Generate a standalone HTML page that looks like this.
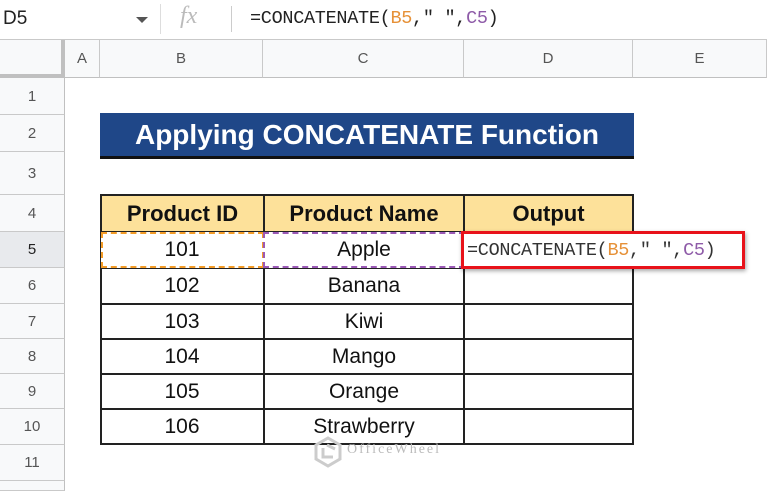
<!DOCTYPE html><html><head><style>
body{margin:0;width:767px;height:487px;overflow:hidden;background:#fff;font-family:"Liberation Sans",Arial,sans-serif;position:relative}
.a{position:absolute;box-sizing:border-box}
.rh{position:absolute;left:0;width:65px;border-bottom:1px solid #c9c9c9;border-right:1px solid #c0c0c0;background:#f8f9fa;color:#555;font-size:15px;display:flex;align-items:center;justify-content:center;box-sizing:border-box}
.ch{position:absolute;top:40px;height:38px;border-right:1px solid #c9c9c9;background:#f8f9fa;color:#555;font-size:15px;display:flex;align-items:center;justify-content:center;box-sizing:border-box;border-bottom:1px solid #c0c0c0}
.c{position:absolute;display:flex;align-items:center;justify-content:center;font-size:21px;color:#111;box-sizing:border-box}
.h{font-weight:bold;font-size:22px}
.f{font-family:"Liberation Mono",monospace;font-size:18.5px;letter-spacing:-0.3px}
</style></head><body>
<div class="a" style="left:0;top:0;width:767px;height:40px;border-bottom:1px solid #c9c9c9"></div>
<div class="a" style="left:3px;top:8px;font-size:19px;color:#222">D5</div>
<div class="a" style="left:136px;top:17px;width:0;height:0;border-left:6px solid transparent;border-right:6px solid transparent;border-top:6px solid #555"></div>
<div class="a" style="left:160px;top:4px;width:1px;height:30px;background:#ddd"></div>
<div class="a" style="left:180px;top:3px;font-size:24px;font-style:italic;color:#bbb;font-family:'Liberation Serif',serif">fx</div>
<div class="a" style="left:231px;top:6px;width:1px;height:26px;background:#ccc"></div>
<div class="a f" style="left:250px;top:8px;color:#222">=CONCATENATE(<span style="color:#e69138">B5</span>," ",<span style="color:#8e5ba8">C5</span>)</div>
<div class="a" style="left:0;top:40px;width:65px;height:38px;background:#f8f9fa;border-right:4px solid #c0c0c0;border-bottom:4px solid #c0c0c0"></div>
<div class="ch" style="left:65px;width:35px">A</div>
<div class="ch" style="left:100px;width:163px">B</div>
<div class="ch" style="left:263px;width:201px">C</div>
<div class="ch" style="left:464px;width:169px">D</div>
<div class="ch" style="left:633px;width:134px">E</div>
<div class="rh" style="top:78px;height:37px">1</div>
<div class="rh" style="top:115px;height:37px">2</div>
<div class="rh" style="top:152px;height:43px">3</div>
<div class="rh" style="top:195px;height:37px">4</div>
<div class="rh" style="top:232px;height:36px;background:#e8eaed;color:#222">5</div>
<div class="rh" style="top:268px;height:36px">6</div>
<div class="rh" style="top:304px;height:35px">7</div>
<div class="rh" style="top:339px;height:35px">8</div>
<div class="rh" style="top:374px;height:35px">9</div>
<div class="rh" style="top:409px;height:36px">10</div>
<div class="rh" style="top:445px;height:36px">11</div>
<div class="rh" style="top:481px;height:10px"></div>
<div class="c" style="left:100px;top:113px;width:534px;height:46px;background:#1f4788;border-bottom:3px solid #111;color:#fff;font-weight:bold;font-size:28px">Applying CONCATENATE Function</div>
<div class="a" style="left:100px;top:194px;width:534px;height:251px;border:2px solid #222"></div>
<div class="c h" style="left:102px;top:196px;width:161px;height:36px;background:#fde19a">Product ID</div>
<div class="c h" style="left:264px;top:196px;width:200px;height:36px;background:#fde19a">Product Name</div>
<div class="c h" style="left:465px;top:196px;width:167px;height:36px;background:#fde19a">Output</div>
<div class="a" style="left:263px;top:194px;width:2px;height:251px;background:#222"></div>
<div class="a" style="left:463px;top:194px;width:2px;height:251px;background:#222"></div>
<div class="a" style="left:100px;top:231px;width:534px;height:2px;background:#222"></div>
<div class="a" style="left:100px;top:267px;width:534px;height:2px;background:#222"></div>
<div class="a" style="left:100px;top:303px;width:534px;height:2px;background:#222"></div>
<div class="a" style="left:100px;top:338px;width:534px;height:2px;background:#222"></div>
<div class="a" style="left:100px;top:373px;width:534px;height:2px;background:#222"></div>
<div class="a" style="left:100px;top:408px;width:534px;height:2px;background:#222"></div>
<div class="a" style="left:101px;top:232px;width:163px;height:36px;border:2px dashed #f39c28;background:#fff"></div>
<div class="a" style="left:263px;top:232px;width:202px;height:36px;border:2px dashed #9b59b6;background:#fff"></div>
<div class="c" style="left:100px;top:232px;width:164px;height:36px">101</div>
<div class="c" style="left:264px;top:232px;width:200px;height:36px">Apple</div>
<div class="c" style="left:100px;top:268px;width:164px;height:36px">102</div>
<div class="c" style="left:264px;top:268px;width:200px;height:36px">Banana</div>
<div class="c" style="left:100px;top:304px;width:164px;height:35px">103</div>
<div class="c" style="left:264px;top:304px;width:200px;height:35px">Kiwi</div>
<div class="c" style="left:100px;top:339px;width:164px;height:35px">104</div>
<div class="c" style="left:264px;top:339px;width:200px;height:35px">Mango</div>
<div class="c" style="left:100px;top:374px;width:164px;height:35px">105</div>
<div class="c" style="left:264px;top:374px;width:200px;height:35px">Orange</div>
<div class="c" style="left:100px;top:409px;width:164px;height:35px">106</div>
<div class="c" style="left:264px;top:409px;width:200px;height:35px">Strawberry</div>
<div class="a" style="left:461px;top:231px;width:284px;height:38px;border:3px solid #e8121a;background:#fff;box-shadow:1px 2px 4px rgba(0,0,0,.35)"></div>
<div class="a f" style="left:467px;top:240px;color:#333">=CONCATENATE(<span style="color:#e69138">B5</span>," ",<span style="color:#8e5ba8">C5</span>)</div>
<svg class="a" style="left:313px;top:436px" width="30" height="32" viewBox="0 0 30 32"><path d="M15 2 L27 9 L27 23 L15 30 L3 23 L3 9 Z M10 12 L10 21 L20 21 M14 9 L22 13" fill="none" stroke="#ccc" stroke-width="3"/></svg>
<div class="a" style="left:347px;top:442px;font-size:14px;color:#bbb;letter-spacing:2px;font-family:'Liberation Serif',serif">OfficeWheel</div>
</body></html>
